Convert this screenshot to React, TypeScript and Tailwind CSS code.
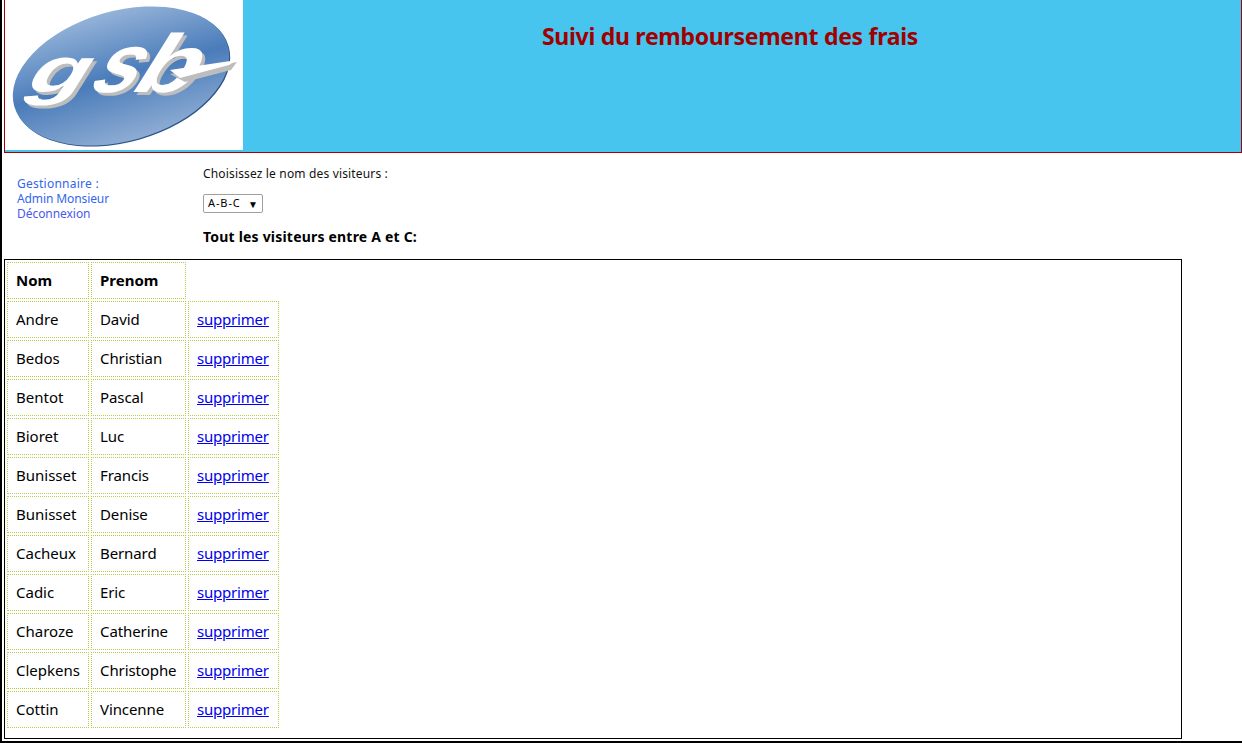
const rows: [string, string][] = [
  ["Andre", "David"],
  ["Bedos", "Christian"],
  ["Bentot", "Pascal"],
  ["Bioret", "Luc"],
  ["Bunisset", "Francis"],
  ["Bunisset", "Denise"],
  ["Cacheux", "Bernard"],
  ["Cadic", "Eric"],
  ["Charoze", "Catherine"],
  ["Clepkens", "Christophe"],
  ["Cottin", "Vincenne"],
];

function Logo() {
  const letters: [string, number, number, number, number][] = [
    ["g", 16, 92, 64, 1.5],
    ["s", 80, 92, 84, 0.95],
    ["b", 122, 92, 82, 1.2],
  ];
  return (
    <svg width="238" height="150" viewBox="0 0 238 150" className="block">
      <defs>
        <linearGradient id="oval" x1="0" y1="0" x2="0" y2="1">
          <stop offset="0" stopColor="#93b2d8" />
          <stop offset="0.5" stopColor="#4a7cba" />
          <stop offset="1" stopColor="#8dacd3" />
        </linearGradient>
      </defs>
      <rect width="238" height="150" fill="#ffffff" />
      <ellipse cx="117" cy="77" rx="111" ry="65" transform="rotate(-16 117 77)" fill="#2c5488" />
      <ellipse cx="116" cy="76" rx="111" ry="65" transform="rotate(-16 116 76)" fill="url(#oval)" />
      <g fontFamily="'Liberation Sans', sans-serif" fontWeight="700">
        {letters.map(([c, x, y, s, k]) => (
          <text key={c + "s"} transform={`translate(${x + 3} ${y + 3}) skewX(-32) scale(${k} 1)`} fontSize={s} fill="#bdbdbd">{c}</text>
        ))}
        {letters.map(([c, x, y, s, k]) => (
          <text key={c} transform={`translate(${x} ${y}) skewX(-32) scale(${k} 1)`} fontSize={s} fill="#ffffff">{c}</text>
        ))}
      </g>
      <polygon points="165,74 232,62 226,70 180,82" fill="#bdbdbd" />
      <polygon points="165,70 232,60 224,65 175,78" fill="#ffffff" />
    </svg>
  );
}

const cell = "border border-dotted border-[#b5cc4f] px-2 h-[37px] align-middle whitespace-nowrap";

export default function App() {
  return (
    <div className="h-[743px] overflow-hidden bg-white border-l-2 border-b-2 border-black pl-[2px] text-black font-['Noto_Sans','Liberation_Sans',sans-serif]">
      <header className="flex h-[153px] border-l border-r border-b border-[#a80000] bg-[#47c5ef] pb-[1px] items-start">
        <Logo />
        <h1 className="flex-1 text-center pr-[24px] pt-[20px] text-[23px] tracking-[-0.28px] leading-[32px] font-bold text-[#a00000]">
          Suivi du remboursement des frais
        </h1>
      </header>
      <div className="flex h-[106px]">
        <aside className="w-[199px] pl-[13px] pt-[23px] text-[12px] leading-[15px] text-[#3366ee]">
          <div className="tracking-[0.25px]">Gestionnaire :</div>
          <div className="tracking-[-0.1px]">Admin Monsieur</div>
          <div className="tracking-[-0.05px] text-[#4a58ee]">Déconnexion</div>
        </aside>
        <section className="pt-[13px]">
          <p className="text-[12px] leading-[15px] tracking-[0.16px] text-[#111111]">Choisissez le nom des visiteurs :</p>
          <div className="mt-[13px] flex items-center justify-between w-[60px] h-[19px] border border-[#a0a0a0] rounded-[2px] bg-white pl-[4px] pr-[4px] text-[11px]">
            <span className="tracking-[0.9px]">A-B-C</span>
            <span className="text-[10px] leading-none">▼</span>
          </div>
          <p className="mt-[14px] text-[14px] leading-[20px] tracking-[0.2px] font-bold">Tout les visiteurs entre A et C:</p>
        </section>
      </div>
      <div className="w-[1178px] h-[480px] border border-black">
        <table className="border-separate border-spacing-[2px] text-[15px]">
          <tbody>
            <tr>
              <th className={cell + " w-[82px] text-left font-bold"}>Nom</th>
              <th className={cell + " w-[95px] text-left font-bold"}>Prenom</th>
            </tr>
            {rows.map(([nom, prenom], i) => (
              <tr key={i}>
                <td className={cell + " w-[82px]"}>{nom}</td>
                <td className={cell + " w-[95px] tracking-[-0.1px]"}>{prenom}</td>
                <td className={cell + " w-[91px]"}>
                  <a href="#" className="text-[#0000ee] underline tracking-[-0.2px]">supprimer</a>
                </td>
              </tr>
            ))}
          </tbody>
        </table>
      </div>
    </div>
  );
}
